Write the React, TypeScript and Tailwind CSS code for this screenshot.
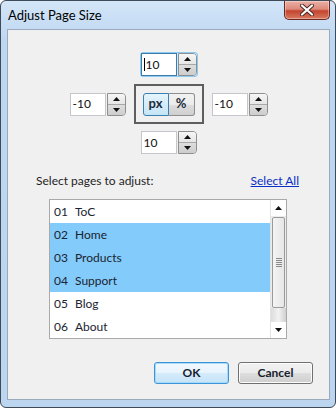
import React from "react";

const font = "font-['Segoe_UI','Lato','Noto_Sans',sans-serif]";

function Arrow({ up }: { up?: boolean }) {
  return (
    <svg width="7" height="4" viewBox="0 0 7 4" className="block">
      {up ? <path d="M0 4 L3.5 0 L7 4 Z" fill="#111" /> : <path d="M0 0 L7 0 L3.5 4 Z" fill="#111" />}
    </svg>
  );
}

function Spin({ value, focused }: { value: string; focused?: boolean }) {
  const box = (
    <div className="flex h-[23px]">
      <div
        className={
          "flex w-[36px] items-center border bg-white pl-[2px] text-[12px] text-[#111] " +
          (focused ? "border-[#3d7bad]" : "border-[#c3c6cb]")
        }
      >
        {focused && <span className="mr-px h-[13px] w-px bg-black" />}
        {value}
      </div>
      <div className="ml-px flex w-[19px] flex-col overflow-hidden rounded-r-[4px] border border-[#8e8f8f]">
        <div className="flex flex-1 items-center justify-center border-b border-[#a8a8a8] bg-[linear-gradient(to_bottom,#f6f6f6,#e6e6e6)]">
          <Arrow up />
        </div>
        <div className="flex flex-1 items-center justify-center bg-[linear-gradient(to_bottom,#dedede,#cdcdcd)]">
          <Arrow />
        </div>
      </div>
    </div>
  );
  if (focused) {
    return <div className="rounded-[3px] border border-[#8ccaf2] bg-[#cfe9fb]">{box}</div>;
  }
  return box;
}

const rows = [
  { n: "01", name: "ToC", sel: false },
  { n: "02", name: "Home", sel: true },
  { n: "03", name: "Products", sel: true },
  { n: "04", name: "Support", sel: true },
  { n: "05", name: "Blog", sel: false },
  { n: "06", name: "About", sel: false },
];

function Scrollbar() {
  return (
    <div className="flex w-[16px] flex-col border-l border-[#e3e3e3] bg-[#ececec]">
      <div className="flex h-[16px] items-center justify-center bg-white">
        <Arrow up />
      </div>
      <div className="mx-px mt-px flex h-[91px] items-center justify-center rounded-[2px] border border-[#9a9a9a] bg-[linear-gradient(to_right,#f4f4f4,#e6e6e6)]">
        <div className="flex flex-col gap-[1px]">
          {[0, 1, 2, 3, 4].map((i) => (
            <div key={i} className="h-px w-[6px] bg-[#8a8a8a]" />
          ))}
        </div>
      </div>
      <div className="flex-1 bg-[linear-gradient(to_right,#dcdcdc,#f2f2f2,#d0d0d0)]" />
      <div className="flex h-[16px] items-center justify-center bg-white">
        <Arrow />
      </div>
    </div>
  );
}

function CloseButton() {
  return (
    <div className="flex h-[19px] w-[46px] items-center justify-center rounded-b-[5px] border border-t-0 border-[#6d2620] bg-[linear-gradient(to_bottom,#eab0a6_0%,#dc8a7a_45%,#c4442f_55%,#d77a60_100%)] shadow-[inset_0_0_0_1px_rgba(255,255,255,0.35)]">
      <svg width="14" height="12" viewBox="0 0 14 12">
        <path d="M2 1.5 L12 10.5 M12 1.5 L2 10.5" stroke="#4a2320" strokeWidth="4" strokeLinecap="round" />
        <path d="M2 1.5 L12 10.5 M12 1.5 L2 10.5" stroke="#ffffff" strokeWidth="2.2" strokeLinecap="round" />
      </svg>
    </div>
  );
}

function DialogButton({ label, primary }: { label: string; primary?: boolean }) {
  return (
    <div
      className={
        "flex h-[22px] w-[75px] items-center justify-center rounded-[3px] border text-[12px] font-bold text-[#15212d] " +
        (primary
          ? "border-[#3c94d6] bg-[linear-gradient(to_bottom,#f2f9fe_0%,#e7f3fc_50%,#d5ebfa_51%,#c5e3f8_100%)] shadow-[inset_0_0_0_1px_#a6dcfa]"
          : "border-[#707070] bg-[linear-gradient(to_bottom,#f2f2f2_0%,#ebebeb_50%,#dddddd_51%,#cfcfcf_100%)] shadow-[inset_0_0_0_1px_#fcfcfc]")
      }
    >
      {label}
    </div>
  );
}

export default function App() {
  return (
    <div className={"h-[408px] w-[336px] bg-white " + font}>
      <div className="flex h-full flex-col rounded-[6px] border border-[#3e4a57] bg-[linear-gradient(to_bottom,#d3e5f8,#bed7f1_40px,#bcd6f0)] pb-[7px] pl-[6px] pr-[5px]">
        <div className="flex h-[28px] items-start justify-between">
          <div className="pl-[1px] pt-[5px] text-[13px] leading-[18px] text-black">Adjust Page Size</div>
          <CloseButton />
        </div>
        <div className="flex flex-1 flex-col border border-[#9aa9bb] bg-[#f0f0f0] text-[12px] text-[#1e1e1e]">
          <div className="mt-[22px] flex flex-col items-center gap-[7px]">
            <Spin value="10" focused />
            <div className="flex items-center gap-[8px]">
              <Spin value="-10" />
              <div className="flex h-[40px] w-[70px] items-center justify-center border-2 border-[#5e5e5e]">
                <div className="flex h-[23px]">
                  <div className="flex w-[26px] items-center justify-center rounded-l-[3px] border border-[#3c7fb1] bg-[linear-gradient(to_bottom,#e5f4fc,#c4e5f6)] pb-px text-[13px] font-bold text-[#1d2c3c]">
                    px
                  </div>
                  <div className="flex w-[26px] items-center justify-center rounded-r-[3px] border border-l-0 border-[#8e8f8f] bg-[linear-gradient(to_bottom,#f2f2f2_0%,#ebebeb_50%,#dddddd_51%,#cfcfcf_100%)] text-[13px] font-bold text-[#1d2c3c]">
                    %
                  </div>
                </div>
              </div>
              <Spin value="-10" />
            </div>
            <Spin value="10" />
          </div>
          <div className="mt-[19px] flex items-center justify-between pl-[28px] pr-[30px] leading-[16px]">
            <span>Select pages to adjust:</span>
            <span className="text-[#0a2fc4] underline">Select All</span>
          </div>
          <div className="ml-[41px] mt-[10px] flex h-[140px] w-[238px] border border-[#a9a9a9] bg-white">
            <div className="flex flex-1 flex-col">
              {rows.map((r) => (
                <div
                  key={r.n}
                  className={"flex h-[23px] items-center pl-[4px] text-[#1b2430] " + (r.sel ? "bg-[#83cbfb]" : "")}
                >
                  <span className="w-[21px]">{r.n}</span>
                  <span>{r.name}</span>
                </div>
              ))}
            </div>
            <Scrollbar />
          </div>
          <div className="mt-[23px] flex justify-end gap-[9px] pr-[16px]">
            <DialogButton label="OK" primary />
            <DialogButton label="Cancel" />
          </div>
        </div>
      </div>
    </div>
  );
}
